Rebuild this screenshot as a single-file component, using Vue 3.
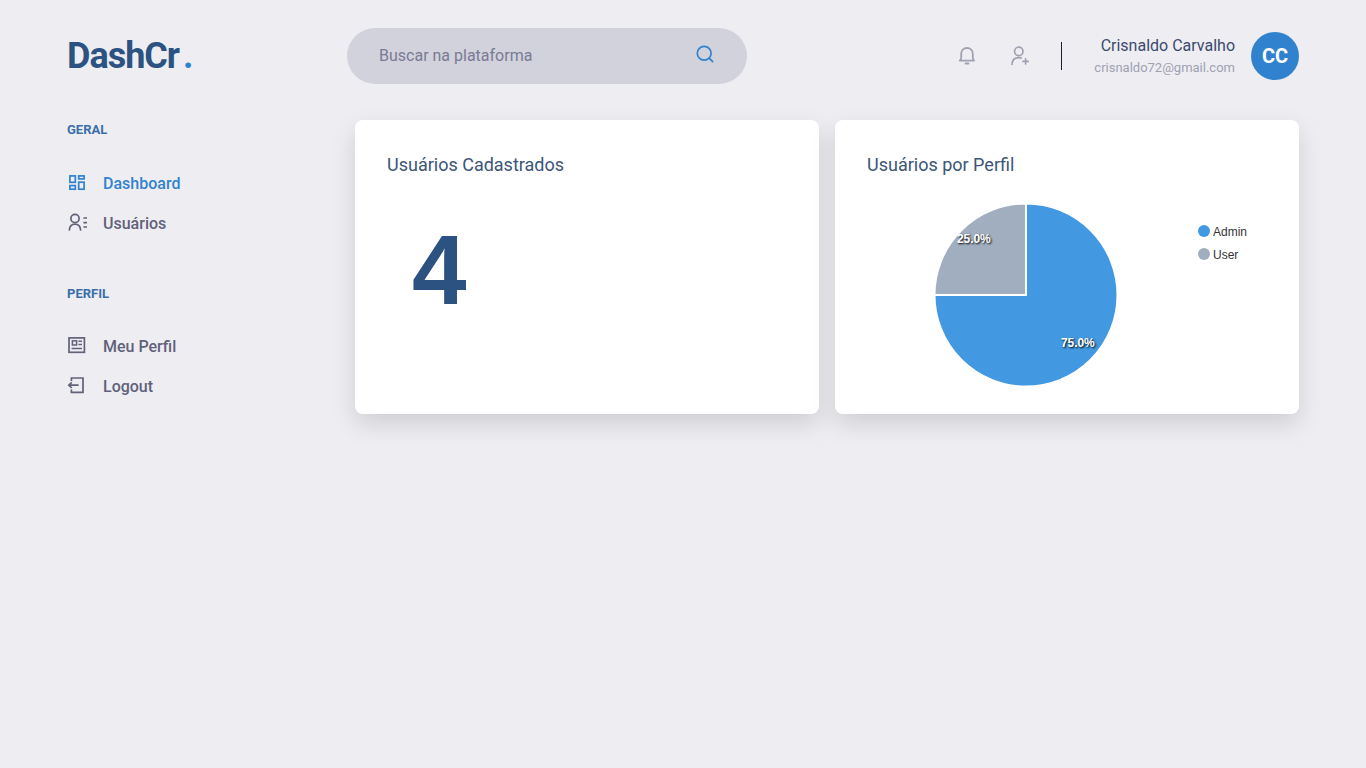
<template>
  <div class="page">
    <header class="topbar">
      <div class="logo">DashCr<span class="logo-dot">.</span></div>
      <div class="search">
        <span class="search-text">Buscar na plataforma</span>
        <svg class="search-icon" width="20" height="20" viewBox="0 0 20 20" fill="none" stroke="#3182ce" stroke-width="1.7" stroke-linecap="round">
          <circle cx="9.2" cy="9.2" r="6.9" />
          <path d="M14.2 14.2 L17.6 17.6" />
        </svg>
      </div>
      <div class="top-right">
        <svg class="top-icon" width="22" height="22" viewBox="0 0 22 22" fill="none" stroke="#a0a0b2" stroke-width="1.8" stroke-linecap="round" stroke-linejoin="round">
          <path d="M3.8 15.6 C4.8 15 5.2 14 5.2 12.6 V8.8 C5.2 5.2 7.6 3 11 3 C14.4 3 16.8 5.2 16.8 8.8 V12.6 C16.8 14 17.2 15 18.2 15.6 Z" />
          <path d="M9.6 18.6 H12.4" stroke-width="2" />
        </svg>
        <svg class="top-icon last" width="22" height="22" viewBox="0 0 22 22" fill="none" stroke="#a0a0b2" stroke-width="1.7" stroke-linecap="round" stroke-linejoin="round">
          <circle cx="9.8" cy="6.4" r="4.2" />
          <path d="M3 19.4 C3.2 14.6 6 12.6 9.8 12.6 C10.7 12.6 11.4 12.7 12.2 12.9" />
          <path d="M16.6 13.8 V19 M14 16.4 H19.2" />
        </svg>
        <div class="divider"></div>
        <div class="user">
          <div class="user-name">Crisnaldo Carvalho</div>
          <div class="user-mail">crisnaldo72@gmail.com</div>
        </div>
        <div class="avatar">CC</div>
      </div>
    </header>

    <div class="body">
      <aside class="sidebar">
        <div v-for="group in menu" :key="group.title" class="group">
          <div class="group-title">{{ group.title }}</div>
          <nav class="links">
            <a v-for="item in group.items" :key="item.label" class="link" :class="{ active: item.active }">
              <svg width="20" height="20" viewBox="0 0 20 20" fill="none" stroke="currentColor" stroke-width="1.7">
                <template v-if="item.icon === 'dash'">
                  <rect x="2.9" y="2.9" width="5.4" height="6.4" />
                  <rect x="11.7" y="2.9" width="5.4" height="3" />
                  <rect x="2.9" y="12.6" width="5.4" height="3.6" />
                  <rect x="11.7" y="9.2" width="5.4" height="7" />
                </template>
                <template v-else-if="item.icon === 'users'">
                  <circle cx="8" cy="5.4" r="4.1" />
                  <path d="M2.4 17 C2.6 13 5 11.2 8 11.2 C10.8 11.2 13.2 13 13.6 17" stroke-linecap="round" />
                  <path d="M16.4 5 H20 M16.4 9.6 H20 M16.4 14 H20" />
                </template>
                <template v-else-if="item.icon === 'card'">
                  <rect x="2" y="1.9" width="15.4" height="14.4" />
                  <rect x="5.4" y="4.8" width="4.2" height="4.2" stroke-width="1.5" />
                  <path d="M11.4 5.2 H15 M11.4 8.4 H15 M4.6 12.6 H15" stroke-width="1.5" />
                </template>
                <template v-else>
                  <path d="M4.4 5 V2 H16 V16.4 H4.4 V13.6" />
                  <path d="M11.6 9.2 H1.8 M4.8 6.4 L1.8 9.2 L4.8 12" />
                </template>
              </svg>
              <span>{{ item.label }}</span>
            </a>
          </nav>
        </div>
      </aside>

      <main class="cards">
        <section class="card">
          <h2 class="card-title">Usuários Cadastrados</h2>
          <div class="big-number">4</div>
        </section>
        <section class="card">
          <h2 class="card-title">Usuários por Perfil</h2>
          <div class="chart">
            <svg class="pie" width="186" height="186" viewBox="0 0 186 186">
              <path d="M93 93 L93 1.5 A91.5 91.5 0 1 1 1.5 93 Z" fill="#4299e1" stroke="#fff" stroke-width="2" />
              <path d="M93 93 L1.5 93 A91.5 91.5 0 0 1 93 1.5 Z" fill="#a0aec0" stroke="#fff" stroke-width="2" />
            </svg>
            <span class="pie-label label-user">25.0%</span>
            <span class="pie-label label-admin">75.0%</span>
            <ul class="legend">
              <li><i class="dot admin"></i>Admin</li>
              <li><i class="dot other"></i>User</li>
            </ul>
          </div>
        </section>
      </main>
    </div>
  </div>
</template>

<script setup>
const menu = [
  {
    title: 'GERAL',
    items: [
      { label: 'Dashboard', icon: 'dash', active: true },
      { label: 'Usuários', icon: 'users' }
    ]
  },
  {
    title: 'PERFIL',
    items: [
      { label: 'Meu Perfil', icon: 'card' },
      { label: 'Logout', icon: 'logout' }
    ]
  }
]
</script>

<style>
html, body {
  background: #eeeef2;
}
</style>

<style scoped>
.page {
  min-height: 768px;
  box-sizing: border-box;
  padding: 28px 67px 0;
  background: #eeeef2;
  font-family: Roboto, "Liberation Sans", sans-serif;
  color: #2c5282;
}

.topbar {
  display: flex;
  align-items: center;
  height: 56px;
}

.logo {
  width: 280px;
  font-size: 36px;
  font-weight: 700;
  letter-spacing: -1px;
  color: #2c5282;
}

.logo-dot {
  margin-left: 4px;
  color: #3182ce;
}

.search {
  width: 400px;
  height: 56px;
  box-sizing: border-box;
  padding: 0 32px 2px;
  border-radius: 28px;
  background: #d1d2dc;
  display: flex;
  align-items: center;
  justify-content: space-between;
}

.search-text {
  font-size: 16px;
  color: #7a7a95;
}

.search-icon {
  margin-top: -2px;
}

.top-right {
  margin-left: auto;
  display: flex;
  align-items: center;
}

.top-icon {
  margin-right: 31px;
}

.top-icon.last {
  margin-right: 30px;
}

.divider {
  width: 1px;
  height: 28px;
  background: #1a202c;
  margin-right: 32px;
}

.user {
  text-align: right;
  margin-right: 16px;
  margin-top: -2px;
}

.user-name {
  font-size: 16px;
  line-height: 19px;
  color: #3a4a6e;
}

.user-mail {
  margin-top: 5px;
  font-size: 13px;
  line-height: 15px;
  color: #a0a0b2;
}

.avatar {
  width: 48px;
  height: 48px;
  border-radius: 50%;
  background: #3182ce;
  color: #fff;
  font-size: 20px;
  font-weight: 700;
  display: flex;
  align-items: center;
  justify-content: center;
}

.body {
  display: flex;
  margin-top: 36px;
}

.sidebar {
  width: 288px;
  flex-shrink: 0;
}

.group {
  margin-bottom: 49px;
}

.group-title {
  font-size: 13px;
  font-weight: 700;
  line-height: 20px;
  color: #3b6ea8;
}

.links {
  margin-top: 31px;
  display: flex;
  flex-direction: column;
  gap: 16px;
}

.group + .group .links {
  margin-top: 30px;
}

.link {
  display: flex;
  align-items: center;
  gap: 16px;
  height: 24px;
  font-size: 16px;
  font-weight: 500;
  color: #61617a;
}

.link.active {
  color: #3182ce;
}

.cards {
  flex: 1;
  display: grid;
  grid-template-columns: 1fr 1fr;
  gap: 16px;
}

.card {
  height: 294px;
  box-sizing: border-box;
  padding: 32px;
  background: #fff;
  border-radius: 8px;
  box-shadow: 0 10px 25px rgba(0, 0, 0, 0.13);
}

.card-title {
  margin: 0;
  font-size: 18px;
  font-weight: 400;
  line-height: 26px;
  color: #3b5578;
}

.big-number {
  margin-top: 36px;
  margin-left: 25px;
  font-family: "Liberation Sans", Arial, sans-serif;
  font-size: 98px;
  font-weight: 700;
  line-height: 112px;
  color: #2c5282;
}

.chart {
  position: relative;
}

.pie {
  position: absolute;
  left: 66px;
  top: 24px;
}

.pie-label {
  position: absolute;
  font-family: "Liberation Sans", Arial, sans-serif;
  font-size: 12px;
  font-weight: 700;
  line-height: 14px;
  letter-spacing: -0.1px;
  color: #fff;
  text-shadow: 1px 1px 2px #000;
}

.label-user {
  left: 90px;
  top: 54px;
}

.label-admin {
  left: 194px;
  top: 158px;
}

.legend {
  position: absolute;
  left: 331px;
  top: 42px;
  margin: 0;
  padding: 0;
  list-style: none;
  font-family: "Liberation Sans", Arial, sans-serif;
  font-size: 12px;
  color: #333;
}

.legend li {
  display: flex;
  align-items: center;
  height: 23px;
}

.dot {
  width: 12px;
  height: 12px;
  border-radius: 50%;
  margin-right: 3px;
  margin-top: -1px;
}

.dot.admin {
  background: #4299e1;
}

.dot.other {
  background: #a0aec0;
}
</style>
